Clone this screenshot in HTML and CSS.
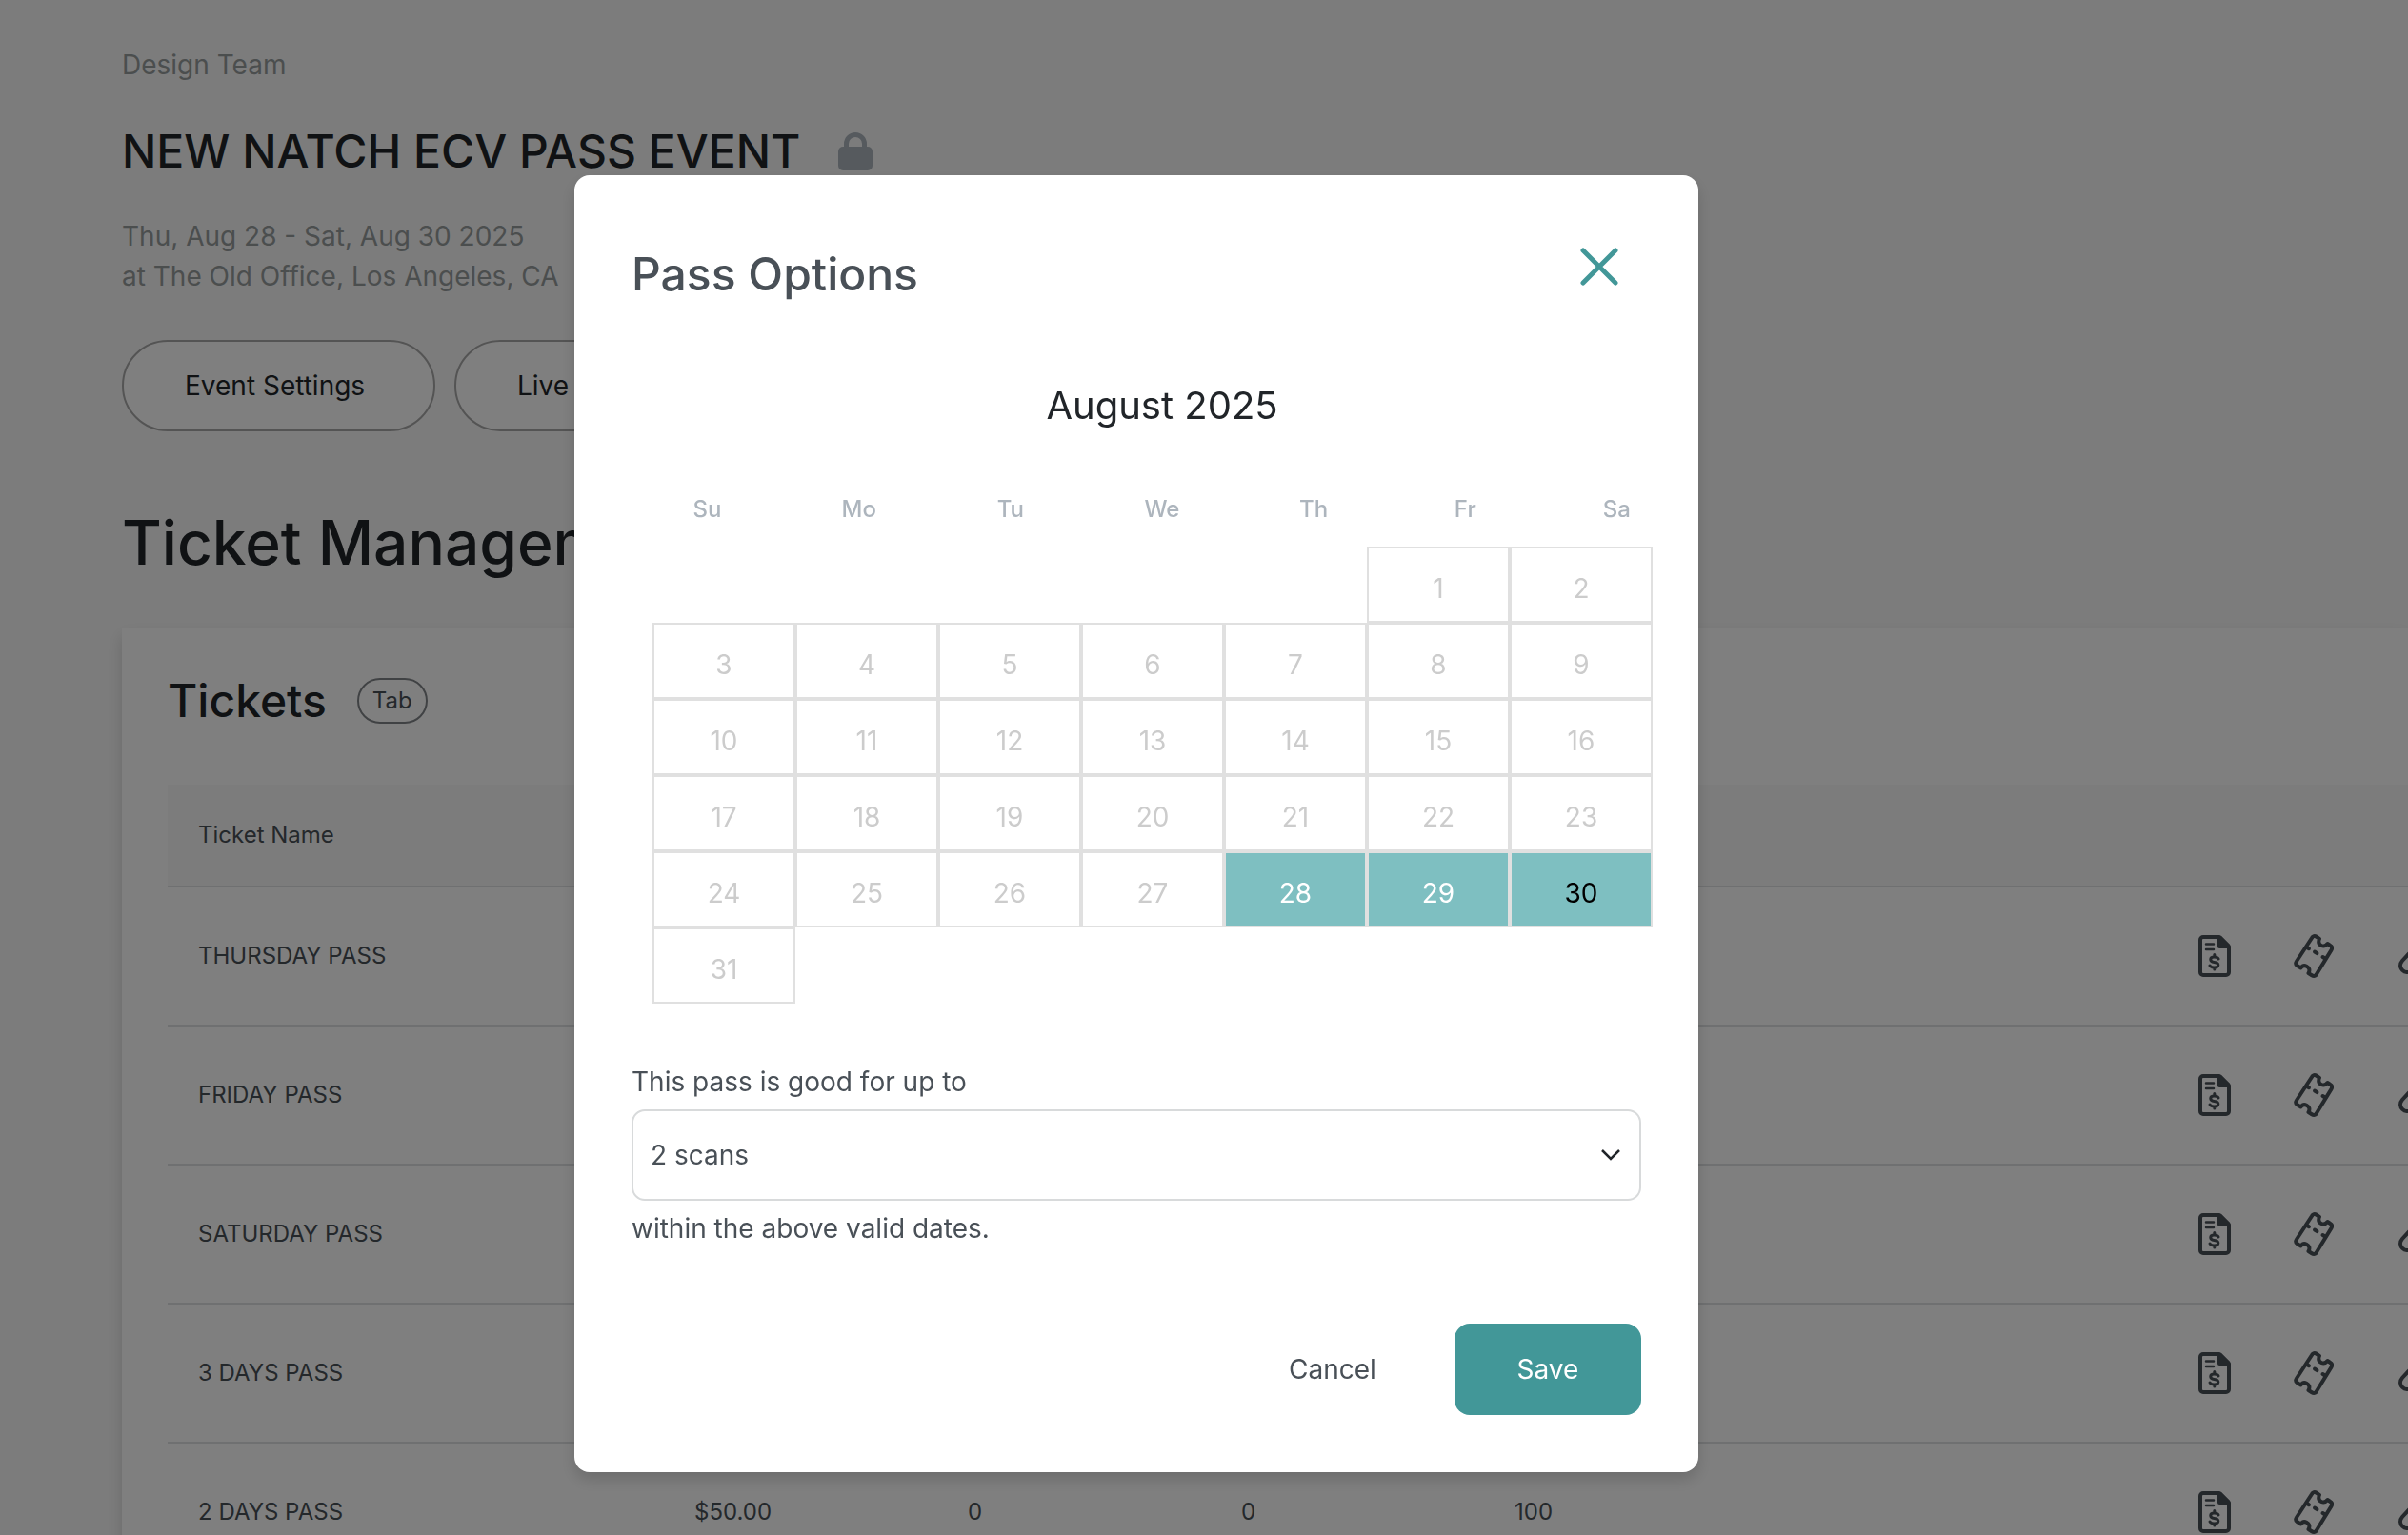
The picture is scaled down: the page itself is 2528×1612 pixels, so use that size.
FILE: index.html
```html
<!DOCTYPE html>
<html lang="en">
<head>
  <meta charset="UTF-8">
  <meta name="viewport" content="width=device-width, initial-scale=1.0">
  <title>Ticket Management</title>
  <link rel="stylesheet" href="styles.css">
</head>
<body class="modal-open">

  <!-- Shared icons -->
  <svg class="icon-defs" aria-hidden="true">
    <symbol id="icon-invoice" viewBox="0 0 34 44">
      <path d="M5 2h17l10 10v27a3 3 0 0 1-3 3H5a3 3 0 0 1-3-3V5a3 3 0 0 1 3-3z" fill="none" stroke="currentColor" stroke-width="4" stroke-linejoin="round"/>
      <path d="M20 1h4l9 9v4H22a2 2 0 0 1-2-2z" fill="currentColor"/>
      <path d="M8 9.500h8M8 15h8" fill="none" stroke="currentColor" stroke-width="2.500" stroke-linecap="round"/>
      <path d="M21 25c-1-2-3-2-4.500-2-5 0-5 5 0 5.500 6 .8 5.500 5.500 0 5.500-2 0-3.500-.5-4.500-2M16.800 20.500v2.500M16.800 34v2" fill="none" stroke="currentColor" stroke-width="3" stroke-linecap="round"/>
    </symbol>
    <symbol id="icon-ticket" viewBox="0 0 42 46">
      <path d="M19 4c1-2 3-2.500 5-1.200l3 2c-1.500 3.500-.5 6 2 7.200s4.500.5 6.500-2l3 2c2 1.200 2 3 1 4.700L24 42c-1 2-3 2.500-5 1.200l-3.500-2.200c2-3.500.5-6-2-7.300s-4.500-.5-6 1.800l-4-2.500c-2-1.200-1.500-3-.5-4.500z" fill="none" stroke="currentColor" stroke-width="4" stroke-linejoin="round"/>
      <path d="M14 14l2 1.200M22 18.500l2.500 1.600M30.500 24l2 1.200" fill="none" stroke="currentColor" stroke-width="4" stroke-linecap="round"/>
    </symbol>
    <symbol id="icon-link" viewBox="0 0 46 46">
      <g fill="none" stroke="currentColor" stroke-width="4" stroke-linecap="round">
        <path d="M17 16 6 28c-6 7 3 16 10 10l8-8"/>
        <path d="M22 16l8-8c7-6 16 3 10 10L29 30"/>
        <path d="M17 29l12-12"/>
      </g>
    </symbol>
  </svg>

  <main class="page">
    <header class="event-header">
      <p class="muted">Design Team</p>
      <div class="event-title">
        <h1>NEW NATCH ECV PASS EVENT</h1>
        <svg class="lock-icon" viewBox="0 0 36 40" aria-hidden="true">
          <rect x="0" y="15" width="36" height="25" rx="5" fill="currentColor"/>
          <path d="M8.500 17v-5a9.500 9.500 0 0 1 19 0v5" fill="none" stroke="currentColor" stroke-width="5"/>
        </svg>
      </div>
      <p class="muted">Thu, Aug 28 - Sat, Aug 30 2025<br>at The Old Office, Los Angeles, CA</p>
      <div class="event-actions">
        <button class="pill-btn" type="button">Event Settings</button>
        <button class="pill-btn" type="button">Live Event</button>
      </div>
    </header>

    <h2 class="page-title">Ticket Management</h2>

    <section class="card">
      <div class="card-header">
        <h3>Tickets</h3>
        <span class="tag">Tab</span>
      </div>
      <div class="table-wrap">
        <table class="tickets">
          <thead>
            <tr>
              <th class="col-name">Ticket Name</th>
              <th class="col-num"></th>
              <th class="col-num"></th>
              <th class="col-num"></th>
              <th class="col-num"></th>
              <th></th>
            </tr>
          </thead>
          <tbody>
            <tr>
              <td>THURSDAY PASS</td><td></td><td></td><td></td><td></td>
              <td><div class="row-actions">
                <button type="button" aria-label="Invoice"><svg class="invoice"><use href="#icon-invoice"/></svg></button>
                <button type="button" aria-label="Ticket"><svg class="ticket"><use href="#icon-ticket"/></svg></button>
                <button type="button" aria-label="Link"><svg class="link"><use href="#icon-link"/></svg></button>
              </div></td>
            </tr>
            <tr>
              <td>FRIDAY PASS</td><td></td><td></td><td></td><td></td>
              <td><div class="row-actions">
                <button type="button" aria-label="Invoice"><svg class="invoice"><use href="#icon-invoice"/></svg></button>
                <button type="button" aria-label="Ticket"><svg class="ticket"><use href="#icon-ticket"/></svg></button>
                <button type="button" aria-label="Link"><svg class="link"><use href="#icon-link"/></svg></button>
              </div></td>
            </tr>
            <tr>
              <td>SATURDAY PASS</td><td></td><td></td><td></td><td></td>
              <td><div class="row-actions">
                <button type="button" aria-label="Invoice"><svg class="invoice"><use href="#icon-invoice"/></svg></button>
                <button type="button" aria-label="Ticket"><svg class="ticket"><use href="#icon-ticket"/></svg></button>
                <button type="button" aria-label="Link"><svg class="link"><use href="#icon-link"/></svg></button>
              </div></td>
            </tr>
            <tr>
              <td>3 DAYS PASS</td><td></td><td></td><td></td><td></td>
              <td><div class="row-actions">
                <button type="button" aria-label="Invoice"><svg class="invoice"><use href="#icon-invoice"/></svg></button>
                <button type="button" aria-label="Ticket"><svg class="ticket"><use href="#icon-ticket"/></svg></button>
                <button type="button" aria-label="Link"><svg class="link"><use href="#icon-link"/></svg></button>
              </div></td>
            </tr>
            <tr>
              <td>2 DAYS PASS</td><td>$50.00</td><td>0</td><td>0</td><td>100</td>
              <td><div class="row-actions">
                <button type="button" aria-label="Invoice"><svg class="invoice"><use href="#icon-invoice"/></svg></button>
                <button type="button" aria-label="Ticket"><svg class="ticket"><use href="#icon-ticket"/></svg></button>
                <button type="button" aria-label="Link"><svg class="link"><use href="#icon-link"/></svg></button>
              </div></td>
            </tr>
          </tbody>
        </table>
      </div>
    </section>
  </main>

  <!-- Pass options modal -->
  <div class="overlay">
    <div class="modal" role="dialog" aria-modal="true" aria-labelledby="modalTitle">
      <div class="modal-header">
        <h2 id="modalTitle">Pass Options</h2>
        <button class="close-btn" type="button" aria-label="Close">
          <svg viewBox="0 0 40 40"><path d="M3 3l34 34M37 3L3 37" fill="none" stroke="currentColor" stroke-width="5" stroke-linecap="round"/></svg>
        </button>
      </div>

      <div class="calendar">
        <div class="calendar-month">August 2025</div>
        <div class="weekdays">
          <span>Su</span><span>Mo</span><span>Tu</span><span>We</span><span>Th</span><span>Fr</span><span>Sa</span>
        </div>
        <table class="days">
          <tr><td></td><td></td><td></td><td></td><td></td><td class="day">1</td><td class="day">2</td></tr>
          <tr><td class="day">3</td><td class="day">4</td><td class="day">5</td><td class="day">6</td><td class="day">7</td><td class="day">8</td><td class="day">9</td></tr>
          <tr><td class="day">10</td><td class="day">11</td><td class="day">12</td><td class="day">13</td><td class="day">14</td><td class="day">15</td><td class="day">16</td></tr>
          <tr><td class="day">17</td><td class="day">18</td><td class="day">19</td><td class="day">20</td><td class="day">21</td><td class="day">22</td><td class="day">23</td></tr>
          <tr><td class="day">24</td><td class="day">25</td><td class="day">26</td><td class="day">27</td><td class="day selected"><button type="button">28</button></td><td class="day selected"><button type="button">29</button></td><td class="day selected last"><button type="button">30</button></td></tr>
          <tr><td class="day">31</td><td></td><td></td><td></td><td></td><td></td><td></td></tr>
        </table>
      </div>

      <div class="scans">
        <label for="scans">This pass is good for up to</label>
        <div class="select-wrap">
          <select id="scans">
            <option>1 scan</option>
            <option selected>2 scans</option>
            <option>3 scans</option>
          </select>
          <svg class="chevron" viewBox="0 0 20 12" aria-hidden="true"><path d="M1 1l9 9 9-9" fill="none" stroke="currentColor" stroke-width="2.500"/></svg>
        </div>
        <p>within the above valid dates.</p>
      </div>

      <div class="modal-footer">
        <button class="cancel-btn" type="button">Cancel</button>
        <button class="save-btn" type="button">Save</button>
      </div>
    </div>
  </div>

</body>
</html>
```

FILE: styles.css
```css
/* Global styles */
* {
  box-sizing: border-box;
}

body {
  margin: 0;
  font-family: Inter, "Liberation Sans", sans-serif;
  font-size: 28px;
  line-height: 42px;
  color: #495057;
  background-color: #f9f9f9;
}

body.modal-open {
  height: 100vh;
  overflow: hidden;
}

h1, h2, h3, p {
  margin: 0;
  font-weight: 500;
}

p {
  font-weight: 400;
}

button, select {
  font: inherit;
  color: inherit;
  cursor: pointer;
}

.icon-defs {
  display: none;
}

/* Event header */
.page {
  padding: 47px 0 0 128px;
}

.muted {
  color: #979c9d;
}

.event-title {
  display: flex;
  align-items: center;
  gap: 40px;
  margin: 38px 0 36px;
}

.event-title h1 {
  font-size: 48px;
  line-height: 64px;
  color: #212529;
}

.lock-icon {
  width: 36px;
  height: 40px;
  color: #adb5bd;
}

.event-actions {
  display: flex;
  gap: 20px;
  margin-top: 46px;
}

.pill-btn {
  min-width: 329px;
  height: 96px;
  padding: 0 64px;
  border: 2px solid #a8a8a8;
  border-radius: 48px;
  background-color: #fff;
  color: #212529;
  text-align: left;
}

.page-title {
  margin: 77px 0 50px;
  font-size: 64px;
  line-height: 80px;
  color: #212529;
}

/* Tickets card */
.card {
  padding: 44px 0 48px 48px;
  background-color: #fff;
  box-shadow: 0 8px 16px rgba(0, 0, 0, 0.15);
}

.card-header {
  display: flex;
  align-items: center;
  gap: 32px;
  margin-bottom: 56px;
}

.card-header h3 {
  font-size: 48px;
  line-height: 64px;
  color: #212529;
}

.tag {
  padding: 0 14px;
  border: 2px solid #808488;
  border-radius: 24px;
  font-size: 24px;
  line-height: 44px;
}

.table-wrap {
  overflow: hidden;
}

/* The last action column runs past the edge and is clipped */
.tickets {
  width: calc(100% + 66px);
  table-layout: fixed;
  border-collapse: separate;
  border-spacing: 0;
  font-size: 24px;
}

.tickets th,
.tickets td {
  height: 146px;
  padding: 0 32px;
  border-bottom: 2px solid #dee0e2;
  font-weight: 400;
  text-align: left;
}

.tickets th {
  height: 108px;
  background-color: #f9f9f9;
}

.col-name {
  width: 521px;
}

.col-num {
  width: 287px;
}

.row-actions {
  display: flex;
  justify-content: flex-end;
  gap: 66px;
}

.row-actions button {
  display: flex;
  padding: 0;
  border: none;
  background: transparent;
}

.invoice {
  width: 34px;
  height: 46px;
}

.ticket {
  width: 42px;
  height: 46px;
}

.link {
  width: 46px;
  height: 46px;
}

/* Modal */
.overlay {
  position: fixed;
  inset: 0;
  display: flex;
  justify-content: center;
  align-items: flex-start;
  padding: 184px 142px 0 0;
  background-color: rgba(0, 0, 0, 0.5);
}

.modal {
  width: 1180px;
  padding: 60px;
  border-radius: 16px;
  background-color: #fff;
  box-shadow: 0 8px 16px rgba(0, 0, 0, 0.15);
}

.modal-header {
  display: flex;
  justify-content: space-between;
  align-items: flex-start;
  padding-top: 12px;
}

.modal-header h2 {
  font-size: 48px;
  line-height: 64px;
}

.close-btn {
  display: flex;
  margin-right: 24px;
  padding: 4px 0;
  border: none;
  background: transparent;
  color: #429798;
}

.close-btn svg {
  width: 40px;
  height: 40px;
}

/* Calendar */
.calendar {
  margin: 80px -54px 61px 0;
}

.calendar-month {
  font-size: 40px;
  line-height: 52px;
  text-align: center;
  color: #212529;
}

.weekdays {
  display: grid;
  grid-template-columns: repeat(7, 1fr);
  margin: 67px 0 23px;
  font-size: 24px;
  line-height: 32px;
  font-weight: 500;
  text-align: center;
  color: #adb5bd;
}

.days {
  width: 1050px;
  margin-left: 22px;
  table-layout: fixed;
  border-collapse: separate;
  border-spacing: 0;
}

.days td {
  height: 80px;
  padding: 8px 0 0;
  text-align: center;
}

.days .day {
  border: 2px solid #e0e0e0;
  color: #ccc;
}

.days .selected {
  background-color: #7ebfc1;
  background-clip: padding-box;
  color: #fff;
}

.days .last {
  color: #000;
}

.selected button {
  padding: 0;
  border: none;
  background: transparent;
}

/* Scans */
.scans {
  display: flex;
  flex-direction: column;
  gap: 8px;
}

.select-wrap {
  position: relative;
}

.select-wrap select {
  display: block;
  width: 100%;
  height: 96px;
  padding: 0 18px;
  border: 2px solid #d8dadb;
  border-radius: 14px;
  background-color: #fff;
  appearance: none;
}

.chevron {
  position: absolute;
  top: 42px;
  right: 22px;
  width: 20px;
  height: 12px;
  color: #212529;
  pointer-events: none;
}

/* Footer */
.modal-footer {
  display: flex;
  justify-content: flex-end;
  gap: 16px;
  margin-top: 79px;
}

.modal-footer button {
  min-width: 196px;
  height: 96px;
  border: none;
  border-radius: 16px;
  background: transparent;
}

.modal-footer .cancel-btn {
  min-width: 224px;
}

.modal-footer .save-btn {
  background-color: #429798;
  color: #fff;
}
```
